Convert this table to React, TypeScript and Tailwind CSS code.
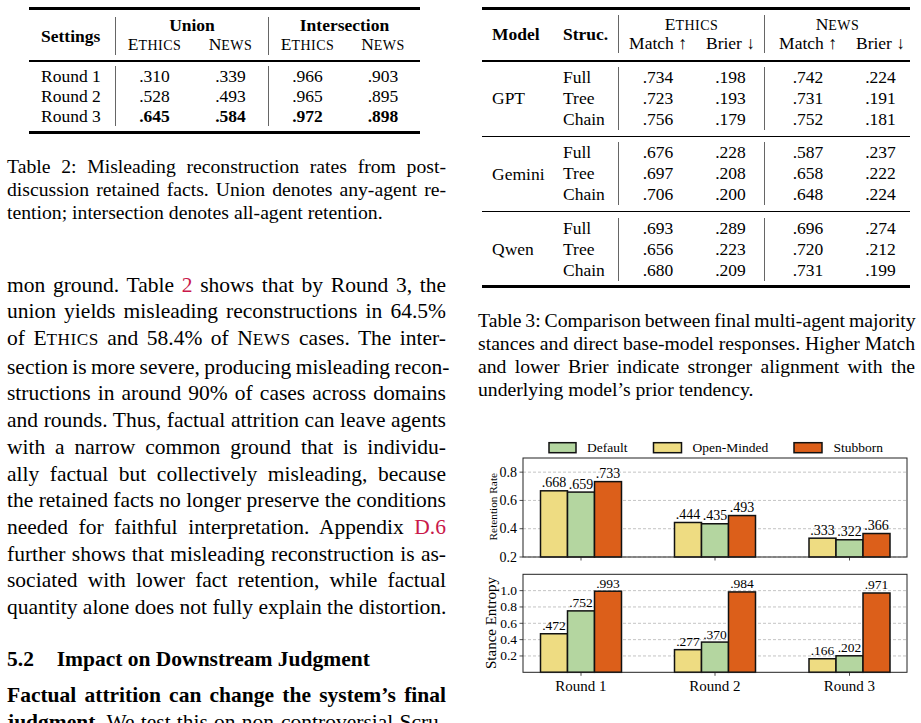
import React from 'react';

const SmallCaps = ({ word }: { word: string }) => (
  <span>
    {word[0]}
    <span className="text-[0.8em] tracking-[0.5px]">{word.slice(1)}</span>
  </span>
);

// one typeset line, stretched to the column width
const J = ({ children }: { children: React.ReactNode }) => (
  <div className="whitespace-nowrap text-justify [text-align-last:justify] [word-spacing:-1px]">{children}</div>
);

const Ref = ({ children }: { children: React.ReactNode }) => (
  <span className="text-[#c9184a]">{children}</span>
);

const misleading = [
  { label: 'Round 1', vals: ['.310', '.339', '.966', '.903'], bold: false },
  { label: 'Round 2', vals: ['.528', '.493', '.965', '.895'], bold: false },
  { label: 'Round 3', vals: ['.645', '.584', '.972', '.898'], bold: true },
];

const Table2 = () => (
  <div className="ml-[22px] w-[391px] text-[17.5px]">
    <div className="h-[3px] bg-black" />
    <div className="flex pt-[7px] pb-[5px]">
      <div className="w-[86px] pl-[12px] flex items-center font-bold">Settings</div>
      <div className="w-[153px] border-l border-[#666]">
        <div className="h-[17px] leading-[17px] text-center font-bold">Union</div>
        <div className="flex h-[21px] leading-[21px]">
          <div className="w-[77px] text-center"><SmallCaps word="ETHICS" /></div>
          <div className="flex-1 text-center"><SmallCaps word="NEWS" /></div>
        </div>
      </div>
      <div className="w-[152px] border-l border-[#666]">
        <div className="h-[17px] leading-[17px] text-center font-bold">Intersection</div>
        <div className="flex h-[21px] leading-[21px]">
          <div className="w-[77px] text-center"><SmallCaps word="ETHICS" /></div>
          <div className="flex-1 text-center"><SmallCaps word="NEWS" /></div>
        </div>
      </div>
    </div>
    <div className="h-[1.5px] bg-black" />
    <div className="flex pt-[4.5px] pb-[5px]">
      <div className="w-[86px] pl-[12px]">
        {misleading.map((r) => (
          <div key={r.label} className="h-[20px] leading-[20px]">{r.label}</div>
        ))}
      </div>
      {[0, 2].map((g) => (
        <div key={g} className={`${g === 0 ? 'w-[153px]' : 'w-[152px]'} border-l border-[#666] flex`}>
          <div className="w-[77px]">
            {misleading.map((r) => (
              <div key={r.label} className={`h-[20px] leading-[20px] text-center ${r.bold ? 'font-bold' : ''}`}>{r.vals[g]}</div>
            ))}
          </div>
          <div className="flex-1">
            {misleading.map((r) => (
              <div key={r.label} className={`h-[20px] leading-[20px] text-center ${r.bold ? 'font-bold' : ''}`}>{r.vals[g + 1]}</div>
            ))}
          </div>
        </div>
      ))}
    </div>
    <div className="h-[3px] bg-black" />
  </div>
);

const models = [
  {
    name: 'GPT',
    rows: [
      ['Full', '.734', '.198', '.742', '.224'],
      ['Tree', '.723', '.193', '.731', '.191'],
      ['Chain', '.756', '.179', '.752', '.181'],
    ],
  },
  {
    name: 'Gemini',
    rows: [
      ['Full', '.676', '.228', '.587', '.237'],
      ['Tree', '.697', '.208', '.658', '.222'],
      ['Chain', '.706', '.200', '.648', '.224'],
    ],
  },
  {
    name: 'Qwen',
    rows: [
      ['Full', '.693', '.289', '.696', '.274'],
      ['Tree', '.656', '.223', '.720', '.212'],
      ['Chain', '.680', '.209', '.731', '.199'],
    ],
  },
];

const Table3 = () => (
  <div className="ml-[4px] w-[428px] text-[17.5px]">
    <div className="h-[3px] bg-black" />
    <div className="flex pt-[5px] pb-[7px]">
      <div className="w-[71px] pl-[10px] flex items-center font-bold">Model</div>
      <div className="w-[65px] pl-[10px] flex items-center font-bold">Struc.</div>
      <div className="w-[146px] border-l border-[#666]">
        <div className="h-[18px] leading-[18px] text-center"><SmallCaps word="ETHICS" /></div>
        <div className="flex h-[20px] leading-[20px]">
          <div className="w-[78px] text-center">Match ↑</div>
          <div className="flex-1 text-center">Brier ↓</div>
        </div>
      </div>
      <div className="w-[146px] border-l border-[#666]">
        <div className="h-[18px] leading-[18px] text-center"><SmallCaps word="NEWS" /></div>
        <div className="flex h-[20px] leading-[20px]">
          <div className="w-[86px] text-center">Match ↑</div>
          <div className="flex-1 text-center">Brier ↓</div>
        </div>
      </div>
    </div>
    <div className="h-[1.5px] bg-black" />
    {models.map((m, mi) => (
      <div key={m.name}>
        <div className={`flex pt-[5.5px] ${mi === 2 ? 'pb-[4px]' : 'pb-[5.5px]'}`}>
          <div className="w-[71px] pl-[10px] flex items-center">{m.name}</div>
          <div className="w-[65px] pl-[10px]">
            {m.rows.map((r) => (
              <div key={r[0]} className="h-[21px] leading-[21px]">{r[0]}</div>
            ))}
          </div>
          {[0, 2].map((g) => (
            <div key={g} className="w-[146px] border-l border-[#666] flex">
              {[g, g + 1].map((c) => (
                <div key={c} className={c % 2 === 0 ? (g === 0 ? 'w-[78px]' : 'w-[86px]') : 'flex-1'}>
                  {m.rows.map((r) => (
                    <div key={r[0]} className="h-[21px] leading-[21px] text-center">{r[c + 1]}</div>
                  ))}
                </div>
              ))}
            </div>
          ))}
        </div>
        {mi < 2 ? <div className="h-[1.3px] bg-black" /> : <div className="h-[3px] bg-black" />}
      </div>
    ))}
  </div>
);

const fills = ['#eedc82', '#b4d6a0', '#dc5f1a'];
const centers = [581, 715, 849.5];
const offsets = [-40.5, -13.5, 13.5];
const retention = [
  [0.668, 0.659, 0.733],
  [0.444, 0.435, 0.493],
  [0.333, 0.322, 0.366],
];
const entropy = [
  [0.472, 0.752, 0.993],
  [0.277, 0.37, 0.984],
  [0.166, 0.202, 0.971],
];

const fmt = (v: number) => v.toFixed(3).slice(1);

interface PanelProps {
  data: number[][];
  top: number;
  bottom: number;
  yOf: (v: number) => number;
  ticks: number[];
  labelSize: number;
  tickSize: number;
}

const Panel = ({ data, top, bottom, yOf, ticks, labelSize, tickSize }: PanelProps) => (
  <g>
    {ticks.map((t) => (
      <g key={t}>
        <line x1={523} x2={907} y1={yOf(t)} y2={yOf(t)} stroke="#b5b5b5" strokeWidth={0.8} strokeDasharray="3 2" />
        <line x1={519.5} x2={523} y1={yOf(t)} y2={yOf(t)} stroke="#222" strokeWidth={0.8} />
        <text x={517} y={yOf(t) + tickSize * 0.33} textAnchor="end" fontSize={tickSize}>{t.toFixed(1)}</text>
      </g>
    ))}
    {data.map((group, gi) =>
      group.map((v, bi) => {
        const x = centers[gi] + offsets[bi];
        const y = yOf(v);
        return (
          <g key={`${gi}-${bi}`}>
            <rect x={x} y={y} width={27} height={bottom - y} fill={fills[bi]} stroke="#111" strokeWidth={1.5} />
            <text x={x + 13.5} y={y - 3.5} textAnchor="middle" fontSize={labelSize}>{fmt(v)}</text>
          </g>
        );
      })
    )}
    {centers.map((c) => (
      <line key={c} x1={c} x2={c} y1={bottom} y2={bottom + 3.5} stroke="#222" strokeWidth={0.8} />
    ))}
    <rect x={523} y={top} width={384} height={bottom - top} fill="none" stroke="#222" strokeWidth={1} />
  </g>
);

const Chart = () => (
  <svg width={443} height={293} viewBox="478 430 443 293" className="block">
    {/* legend */}
    <rect x={549} y={442.7} width={27} height={10} fill={fills[1]} stroke="#111" strokeWidth={1.5} />
    <text x={587} y={452} fontSize={13.5}>Default</text>
    <rect x={653.5} y={442.7} width={28} height={10} fill={fills[0]} stroke="#111" strokeWidth={1.5} />
    <text x={692.5} y={452} fontSize={13.5}>Open-Minded</text>
    <rect x={794} y={442.7} width={28} height={10} fill={fills[2]} stroke="#111" strokeWidth={1.5} />
    <text x={833.5} y={452} fontSize={13.5}>Stubborn</text>

    <Panel
      data={retention}
      top={458}
      bottom={557}
      yOf={(v) => 557 - (v - 0.2) * 141.43}
      ticks={[0.2, 0.4, 0.6, 0.8]}
      labelSize={14}
      tickSize={14}
    />
    <text transform="translate(496.5 506.7) rotate(-90)" textAnchor="middle" fontSize={11.3}>Retention Rate</text>

    <Panel
      data={entropy}
      top={574.3}
      bottom={672.3}
      yOf={(v) => 672.3 - v * 81.67}
      ticks={[0.2, 0.4, 0.6, 0.8, 1.0]}
      labelSize={13.5}
      tickSize={13.5}
    />
    <text transform="translate(496 623) rotate(-90)" textAnchor="middle" fontSize={15}>Stance Entropy</text>

    {centers.map((c, i) => (
      <text key={c} x={c} y={691} textAnchor="middle" fontSize={15}>{`Round ${i + 1}`}</text>
    ))}
  </svg>
);

export default function App() {
  return (
    <div className="w-[921px] h-[723px] overflow-hidden bg-white text-black font-['Liberation_Serif',serif] flex pl-[7px]">
      {/* Left column */}
      <div className="w-[439px] shrink-0 flex flex-col pt-[7px]">
        <Table2 />

        <div className="mt-[21px] text-[19.7px] leading-[23px]">
          <J>Table 2: Misleading reconstruction rates from post-</J>
          <J>discussion retained facts. Union denotes any-agent re-</J>
          <div className="whitespace-nowrap">tention; intersection denotes all-agent retention.</div>
        </div>

        <div className="mt-[47.6px] text-[21.5px] leading-[26.7px]">
          <J>mon ground. Table <Ref>2</Ref> shows that by Round 3, the</J>
          <J>union yields misleading reconstructions in 64.5%</J>
          <J>of <SmallCaps word="ETHICS" /> and 58.4% of <SmallCaps word="NEWS" /> cases. The inter-</J>
          <J>section is more severe, producing misleading recon-</J>
          <J>structions in around 90% of cases across domains</J>
          <J>and rounds. Thus, factual attrition can leave agents</J>
          <J>with a narrow common ground that is individu-</J>
          <J>ally factual but collectively misleading, because</J>
          <J>the retained facts no longer preserve the conditions</J>
          <J>needed for faithful interpretation. Appendix <Ref>D.6</Ref></J>
          <J>further shows that misleading reconstruction is as-</J>
          <J>sociated with lower fact retention, while factual</J>
          <div className="whitespace-nowrap">quantity alone does not fully explain the distortion.</div>
        </div>

        <div className="mt-[25px] text-[21.5px] leading-[26.7px] font-bold flex">
          <span className="w-[49.7px] shrink-0">5.2</span>
          <span>Impact on Downstream Judgment</span>
        </div>

        <div className="mt-[10px] text-[21.5px] leading-[26.7px]">
          <J><span className="font-bold">Factual attrition can change the system’s final</span></J>
          <J><span className="font-bold">judgment.</span> We test this on non-controversial Scru-</J>
        </div>
      </div>

      {/* Right column */}
      <div className="ml-[32px] w-[443px] shrink-0 flex flex-col pt-[7px]">
        <Table3 />

        <div className="mt-[21px] w-[437px] text-[19.7px] leading-[23px]">
          <J>Table 3: Comparison between final multi-agent majority</J>
          <J>stances and direct base-model responses. Higher Match</J>
          <J>and lower Brier indicate stronger alignment with the</J>
          <div className="whitespace-nowrap">underlying model’s prior tendency.</div>
        </div>

        <div className="mt-[29.5px]">
          <Chart />
        </div>
      </div>
    </div>
  );
}
